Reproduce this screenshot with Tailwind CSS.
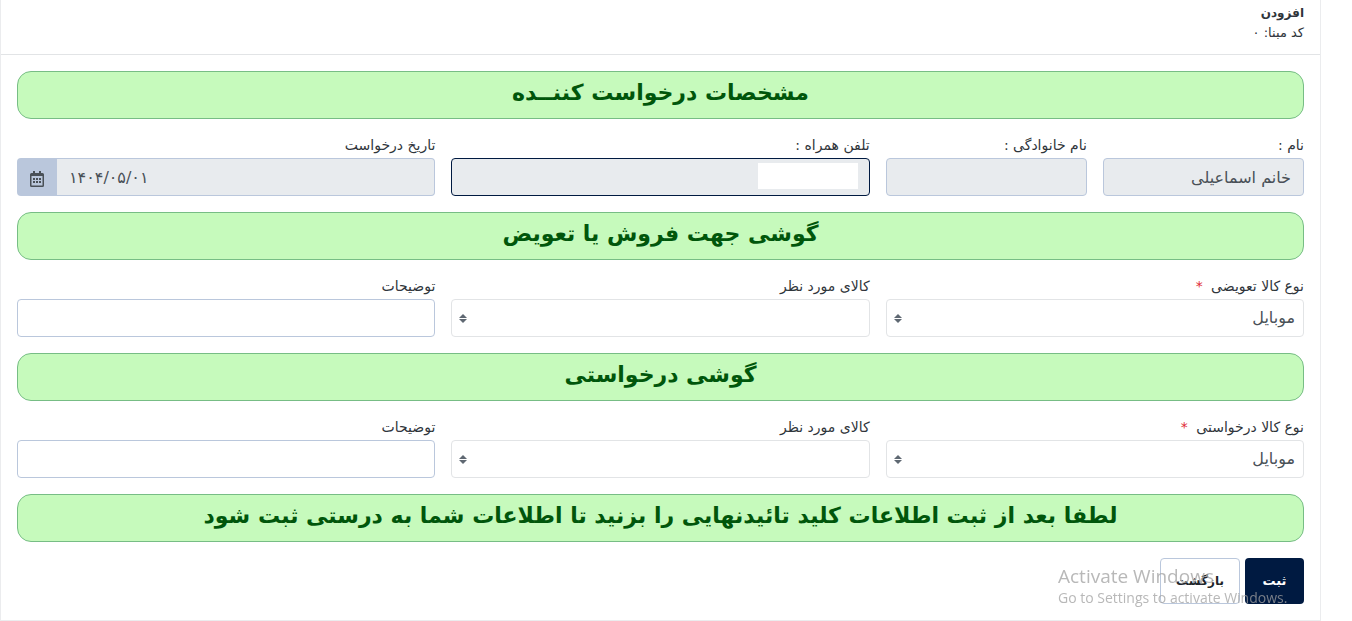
<!DOCTYPE html>
<html lang="fa" dir="rtl">
<head>
<meta charset="utf-8">
<meta name="viewport" content="width=device-width, initial-scale=1">
<title>افزودن</title>
<script src="https://cdn.jsdelivr.net/npm/@tailwindcss/browser@4"></script>
</head>
<body class="bg-white pl-0 pr-[31px] font-['DejaVu_Sans',sans-serif] text-[#2f353b]">
<main class="border border-t-0 border-[#ebecee]">
  <header class="flex h-[55px] flex-col justify-center border-b border-[#e2e4e6] px-4 pb-2">
    <h1 class="text-xs leading-5 font-bold">افزودن</h1>
    <p class="text-[13px] leading-5">کد مبنا: ۰</p>
  </header>
  <form class="flex flex-col gap-4 p-4">
    <h2 class="h-12 rounded-[14px] border border-[#77bd85] bg-[#c6fabc] text-center text-[22px] leading-[42px] font-bold text-[#00560b]">مشخصات درخواست کننــده</h2>
    <div class="grid grid-cols-3 gap-4">
      <div class="grid grid-cols-2 gap-4">
        <div>
          <label for="first" class="block h-[23px] text-sm leading-5">نام :</label>
          <input id="first" readonly value="خانم اسماعیلی" class="block h-[38px] w-full rounded border border-[#bac7dc] bg-[#e8ebee] px-3 text-base text-[#495057]">
        </div>
        <div>
          <label for="last" class="block h-[23px] text-sm leading-5">نام خانوادگی :</label>
          <input id="last" readonly class="block h-[38px] w-full rounded border border-[#bac7dc] bg-[#e8ebee] px-3 text-base text-[#495057]">
        </div>
      </div>
      <div>
        <label for="phone" class="block h-[23px] text-sm leading-5">تلفن همراه :</label>
        <div class="relative">
          <input id="phone" readonly class="block h-[38px] w-full rounded border border-[#001a41] bg-[#e8ebee] px-3 text-base text-[#495057] outline-none">
          <span class="absolute top-[5px] right-3 h-[26px] w-[100px] bg-white"></span>
        </div>
      </div>
      <div>
        <label for="date" class="block h-[23px] text-sm leading-5">تاریخ درخواست</label>
        <div class="flex">
          <input id="date" readonly dir="ltr" value="۱۴۰۴/۰۵/۰۱" class="block h-[38px] min-w-0 flex-1 rounded-r border border-l-0 border-[#bac7dc] bg-[#e8ebee] px-3 text-left text-base text-[#495057]">
          <button type="button" aria-label="تقویم" class="flex h-[38px] w-10 items-center justify-center rounded-l bg-[#bac7dc] pt-1 text-[#495057]">
            <svg class="h-4 w-3.5" viewBox="0 0 14 16" fill="currentColor"><path fill-rule="evenodd" d="M3 0h2v2h4V0h2v2h1.500a1.500 1.500 0 0 1 1.500 1.500v11a1.500 1.500 0 0 1-1.500 1.500h-11a1.500 1.500 0 0 1-1.500-1.500v-11A1.500 1.500 0 0 1 1.500 2H3zM1.500 5v9.500h11V5z"/><path d="M3 7h2v2H3zM6 7h2v2H6zM9 7h2v2H9zM3 10h2v2H3zM6 10h2v2H6zM9 10h2v2H9z"/></svg>
          </button>
        </div>
      </div>
    </div>

    <h2 class="h-12 rounded-[14px] border border-[#77bd85] bg-[#c6fabc] text-center text-[22px] leading-[42px] font-bold text-[#00560b]">گوشی جهت فروش یا تعویض</h2>
    <div class="grid grid-cols-3 gap-4">
      <div>
        <label for="swap-type" class="block h-[23px] text-sm leading-5">نوع کالا تعویضی <span class="mr-1 text-[#e02a35]">*</span></label>
        <div class="relative">
          <select id="swap-type" class="block h-[38px] w-full appearance-none rounded border border-[#e2e4e6] bg-white px-2 text-base text-[#495057]"><option>موبایل</option></select>
          <svg class="pointer-events-none absolute top-[15px] left-2 h-[9px] w-2" viewBox="0 0 8 9" fill="#5f6872"><path d="M4 0L0 4h8zM4 9L0 5h8z"/></svg>
        </div>
      </div>
      <div>
        <label for="swap-item" class="block h-[23px] text-sm leading-5">کالای مورد نظر</label>
        <div class="relative">
          <select id="swap-item" class="block h-[38px] w-full appearance-none rounded border border-[#e2e4e6] bg-white px-2 text-base text-[#495057]"><option></option></select>
          <svg class="pointer-events-none absolute top-[15px] left-2 h-[9px] w-2" viewBox="0 0 8 9" fill="#5f6872"><path d="M4 0L0 4h8zM4 9L0 5h8z"/></svg>
        </div>
      </div>
      <div>
        <label for="swap-note" class="block h-[23px] text-sm leading-5">توضیحات</label>
        <input id="swap-note" class="block h-[38px] w-full rounded border border-[#bac7dc] bg-white px-3 text-base text-[#495057]">
      </div>
    </div>

    <h2 class="h-12 rounded-[14px] border border-[#77bd85] bg-[#c6fabc] text-center text-[22px] leading-[42px] font-bold text-[#00560b]">گوشی درخواستی</h2>
    <div class="grid grid-cols-3 gap-4">
      <div>
        <label for="want-type" class="block h-[23px] text-sm leading-5">نوع کالا درخواستی <span class="mr-1 text-[#e02a35]">*</span></label>
        <div class="relative">
          <select id="want-type" class="block h-[38px] w-full appearance-none rounded border border-[#e2e4e6] bg-white px-2 text-base text-[#495057]"><option>موبایل</option></select>
          <svg class="pointer-events-none absolute top-[15px] left-2 h-[9px] w-2" viewBox="0 0 8 9" fill="#5f6872"><path d="M4 0L0 4h8zM4 9L0 5h8z"/></svg>
        </div>
      </div>
      <div>
        <label for="want-item" class="block h-[23px] text-sm leading-5">کالای مورد نظر</label>
        <div class="relative">
          <select id="want-item" class="block h-[38px] w-full appearance-none rounded border border-[#e2e4e6] bg-white px-2 text-base text-[#495057]"><option></option></select>
          <svg class="pointer-events-none absolute top-[15px] left-2 h-[9px] w-2" viewBox="0 0 8 9" fill="#5f6872"><path d="M4 0L0 4h8zM4 9L0 5h8z"/></svg>
        </div>
      </div>
      <div>
        <label for="want-note" class="block h-[23px] text-sm leading-5">توضیحات</label>
        <input id="want-note" class="block h-[38px] w-full rounded border border-[#bac7dc] bg-white px-3 text-base text-[#495057]">
      </div>
    </div>

    <h2 class="h-12 rounded-[14px] border border-[#77bd85] bg-[#c6fabc] text-center text-[22px] leading-[42px] font-bold text-[#00560b]">لطفا بعد از ثبت اطلاعات کلید تائیدنهایی را بزنید تا اطلاعات شما به درستی ثبت شود</h2>
    <div class="flex gap-[5px]">
      <button type="submit" class="h-[46px] w-[59px] rounded bg-[#001a41] text-[13px] font-bold text-white">ثبت</button>
      <button type="button" class="h-[46px] w-20 rounded border border-[#bac7dc] bg-white text-xs font-bold text-[#212529]">بازگشت</button>
    </div>
  </form>
</main>
<aside dir="ltr" class="pointer-events-none fixed right-[58px] bottom-[13px] w-[236px] font-['Open_Sans',sans-serif] whitespace-nowrap text-[#a0a0a0]/75">
  <p class="text-[19px] leading-6">Activate Windows</p>
  <p class="text-sm leading-5">Go to Settings to activate Windows.</p>
</aside>
</body>
</html>
